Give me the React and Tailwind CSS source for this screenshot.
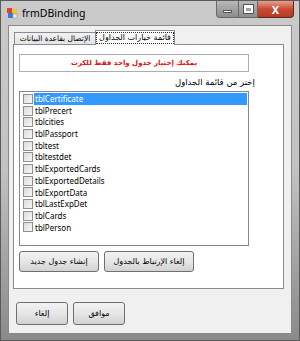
import React from "react";

const tables = [
  "tblCertificate",
  "tblPrecert",
  "tblcities",
  "tblPassport",
  "tbltest",
  "tbltestdet",
  "tblExportedCards",
  "tblExportedDetails",
  "tblExportData",
  "tblLastExpDet",
  "tblCards",
  "tblPerson",
];

const arabic = { fontFamily: '"DejaVu Sans", "Noto Sans", sans-serif' };
const latin = { fontFamily: '"Noto Sans", "DejaVu Sans", sans-serif' };

const WinButton = ({ className, children }) => (
  <button
    className={`flex items-center justify-center rounded-[3px] border border-[#707070] bg-gradient-to-b from-[#f2f2f2] via-[#e6e6e6] to-[#d2d2d2] text-[8px] leading-none text-black whitespace-nowrap ${className}`}
    style={arabic}
  >
    {children}
  </button>
);

const FormIcon = () => (
  <svg width="11" height="11" viewBox="0 0 11 11">
    <rect x="0" y="0" width="5" height="5" fill="#d9442b" />
    <rect x="5" y="1" width="5" height="5" fill="#f3c32a" />
    <rect x="1" y="5" width="5" height="5" fill="#3a78d6" />
    <rect x="6" y="6" width="4" height="4" fill="#e9e9e9" stroke="#9a9a9a" strokeWidth="0.6" />
  </svg>
);

const CheckBox = () => (
  <span className="block w-[10px] h-[10px] shrink-0 border border-[#8e8f8f] bg-gradient-to-br from-[#dcdcdc] to-[#f7f7f7]" />
);

export default function App() {
  return (
    <div className="w-[300px] h-[341px] flex flex-col bg-gradient-to-b from-[#cacaca] via-[#c2c2c2] to-[#8a8a8a] border border-[#5a5a5a]">
      {/* title bar */}
      <div className="h-[22px] flex items-start shrink-0">
        <div className="flex items-center pl-[6px] pt-[7px] gap-[4px]">
          <FormIcon />
          <span className="text-[10.5px] leading-none text-black" style={latin}>
            frmDBinding
          </span>
        </div>
        <div className="ml-auto flex mr-[5px]">
          <div className="w-[23px] h-[17px] border border-[#6a6a6a] border-t-0 rounded-bl-[4px] bg-gradient-to-b from-[#b8b8b8] to-[#8c8c8c] flex items-end justify-center pb-[4px]">
            <span className="block w-[9px] h-[3px] bg-white border border-[#555]" />
          </div>
          <div className="w-[19px] h-[17px] border border-[#6a6a6a] border-t-0 border-l-0 bg-gradient-to-b from-[#b8b8b8] to-[#8c8c8c] flex items-center justify-center">
            <span className="block w-[9px] h-[8px] border-2 border-white border-t-[3px] outline outline-1 outline-[#555]" />
          </div>
          <div className="w-[36px] h-[17px] border border-[#5a2a22] border-t-0 border-l-0 rounded-br-[4px] bg-gradient-to-b from-[#e8a08c] via-[#c94a34] to-[#b93a22] flex items-center justify-center text-white text-[11px] font-bold leading-none" style={latin}>
            X
          </div>
        </div>
      </div>

      {/* client area */}
      <div className="flex-1 mx-[7px] mt-[2px] mb-[6px] bg-[#f0f0f0] border border-[#8a8a8a] flex flex-col px-[4px] pt-[3px]">
        {/* tab headers */}
        <div className="flex items-end h-[15px] pl-[1px]">
          <div className="h-[12px] w-[82px] border border-b-0 border-[#898c95] bg-gradient-to-b from-[#f2f2f2] to-[#e3e3e3] flex items-center justify-center text-[7.5px] leading-none text-black whitespace-nowrap" style={arabic}>
            الإتصال بقاعدة البيانات
          </div>
          <div className="h-[15px] w-[80px] -ml-[1px] border border-b-0 border-[#898c95] bg-white flex items-center justify-center relative z-10 -mb-[1px]">
            <span className="px-[2px] border border-dotted border-[#333] text-[8px] leading-[10px] text-black whitespace-nowrap" style={arabic}>
              قائمة خيارات الجداول
            </span>
          </div>
        </div>

        {/* tab page */}
        <div className="w-[271px] h-[245px] border border-[#898c95] bg-white flex flex-col pl-[5px] pt-[9px]">
          <div className="w-[230px] h-[18px] border border-[#abadb3] bg-white flex items-center justify-center text-[7px] font-bold text-[#e01010]" style={arabic}>
            يمكنك إختيار جدول واحد فقط للكرت
          </div>

          <div className="w-[236px] mt-[4px] h-[13px] text-right text-[8.5px] text-black leading-[13px]" style={arabic}>
            إختر من قائمة الجداول
          </div>

          <div className="w-[230px] h-[155px] mt-[2px] border border-[#828790] bg-white pt-[1px] px-[1px]">
            {tables.map((t, i) => (
              <div key={t} className="flex items-center h-[11.7px] overflow-hidden">
                <div className="w-[13px] flex justify-center shrink-0">
                  <CheckBox />
                </div>
                <span
                  className={`flex-1 h-full pl-[1px] text-[8px] leading-[11.7px] whitespace-nowrap ${
                    i === 0 ? "bg-[#3399ff] text-white" : "text-black"
                  }`}
                  style={latin}
                >
                  {t}
                </span>
              </div>
            ))}
          </div>

          <div className="flex gap-[5px] mt-[5px]">
            <WinButton className="w-[80px] h-[21px]">إنشاء جدول جديد</WinButton>
            <WinButton className="w-[90px] h-[21px]">إلغاء الإرتباط بالجدول</WinButton>
          </div>
        </div>

        {/* dialog buttons */}
        <div className="flex gap-[5px] mt-[13px] pl-[3px]">
          <WinButton className="w-[52px] h-[23px]">إلغاء</WinButton>
          <WinButton className="w-[52px] h-[23px]">موافق</WinButton>
        </div>
      </div>
    </div>
  );
}
